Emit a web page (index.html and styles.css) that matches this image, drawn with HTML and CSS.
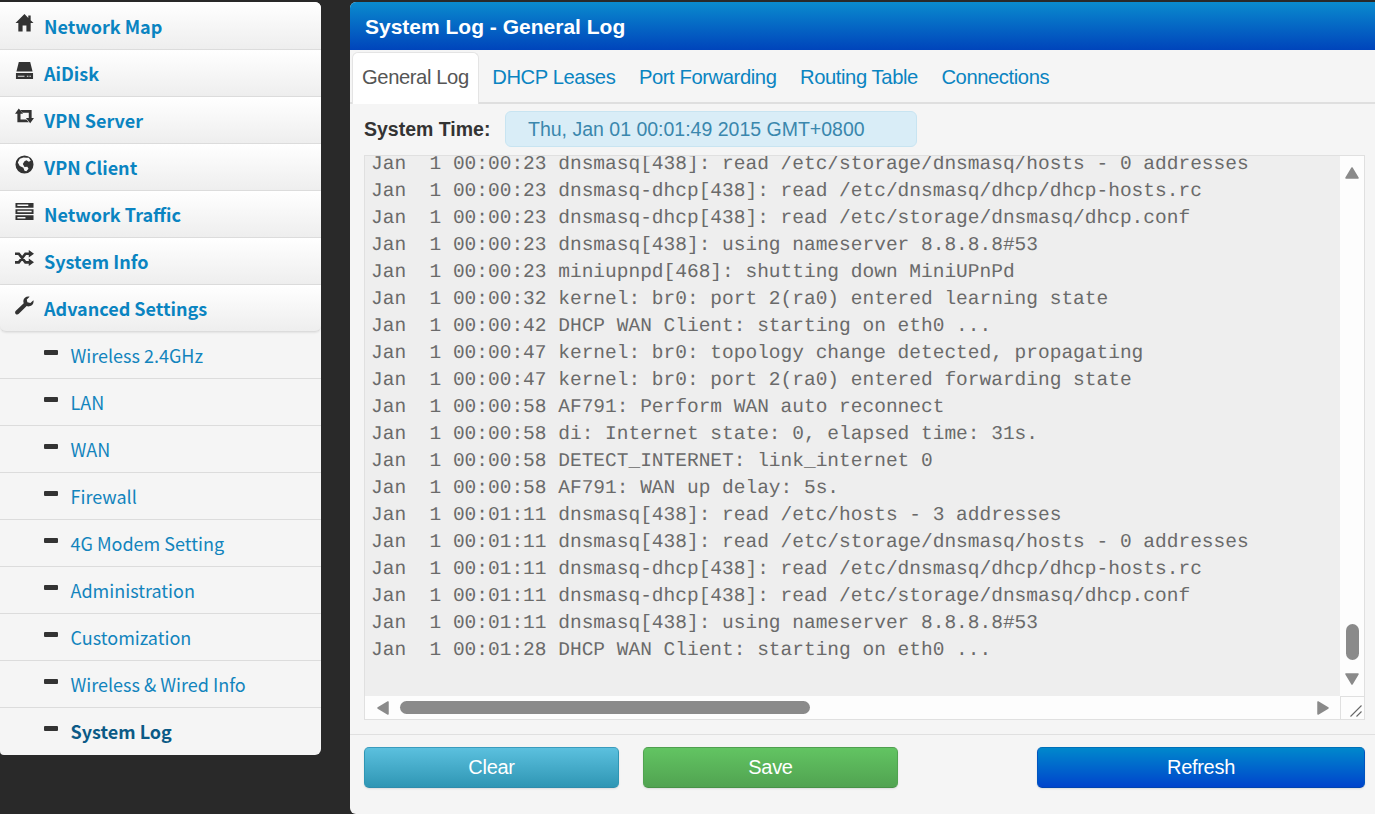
FILE: index.html
```html
<!DOCTYPE html>
<html lang="en">
<head>
<meta charset="utf-8">
<title>System Log - General Log</title>
<link rel="stylesheet" href="styles.css">
</head>
<body>
<div class="page">
  <nav class="side">
    <a class="top first"><svg class="ico" viewBox="0 0 20 20"><path d="M10 0 .5 9.5H3.5V18.5H8V12H12V18.5H16.5V9.5H19.5L16.5 6.6V1.5H14V4.2Z"/></svg><span>Network Map</span></a>
    <a class="top"><svg class="ico" viewBox="0 0 20 20"><path d="M4 1H16L18.5 11H1.5ZM1 12.5H19V19H1Z"/><path class="cut" d="M12.5 16h1.6M15.2 16h1.6M3 16h7"/></svg><span>AiDisk</span></a>
    <a class="top"><svg class="ico" viewBox="0 0 20 20"><path d="M4 .5 8.5 6H5.8V12H12L14.5 15H2.5V6H0ZM5.5 2H17.5V10.5H20L16 16 11.5 10.5H14.5V5H8Z"/></svg><span>VPN Server</span></a>
    <a class="top"><svg class="ico" viewBox="0 0 20 20"><path fill-rule="evenodd" d="M10 .5a9.5 9.5 0 1 0 0 19 9.5 9.5 0 0 0 0-19ZM9 2.6 12 3 14.5 2.8 16.6 6 14.5 7 12 5.6 10 6.5 8.2 9.5 10 12.5 13 12.3 14.2 14.5 12 17 10 16.6 8.8 13.5 5 11.5 3 8 5 4Z"/></svg><span>VPN Client</span></a>
    <a class="top"><svg class="ico" viewBox="0 0 20 20"><path fill-rule="evenodd" d="M.5 1H19.5V6H.5ZM.5 7.5H19.5V12.5H.5ZM.5 14H19.5V19H.5ZM2.5 2.7V4.3H14V2.7ZM2.5 9.2V10.8H17.5V9.2ZM2.5 15.7V17.3H11V15.7Z"/></svg><span>Network Traffic</span></a>
    <a class="top"><svg class="ico" viewBox="0 0 20 20"><path class="ln" d="M0 5H4L11 14H15M0 14H4L11 5H15"/><path d="M14.5 1 20 5 14.5 9ZM14.5 10 20 14 14.5 18Z"/></svg><span>System Info</span></a>
    <a class="top adv"><svg class="ico" viewBox="0 0 20 20"><path d="M19.4 4.4 16.2 7.4 13 6.6 12.4 3.7 15.4.7C12.5-.2 9 1.7 8.8 5 8.7 6 8.9 6.8 9.2 7.6L.9 15.6C-.2 16.7-.1 18 .7 18.9 1.6 19.8 3 19.8 4 18.8L12.3 10.6C13 10.9 14 11 15 10.9 18.2 10.4 20.2 7.4 19.4 4.4Z"/></svg><span>Advanced Settings</span></a>
    <a class="sub"><i class="dash"></i><span>Wireless 2.4GHz</span></a>
    <a class="sub"><i class="dash"></i><span>LAN</span></a>
    <a class="sub"><i class="dash"></i><span>WAN</span></a>
    <a class="sub"><i class="dash"></i><span>Firewall</span></a>
    <a class="sub"><i class="dash"></i><span>4G Modem Setting</span></a>
    <a class="sub"><i class="dash"></i><span>Administration</span></a>
    <a class="sub"><i class="dash"></i><span>Customization</span></a>
    <a class="sub"><i class="dash"></i><span>Wireless &amp; Wired Info</span></a>
    <a class="sub active"><i class="dash"></i><span>System Log</span></a>
  </nav>
  <main class="panel">
    <h1 class="title">System Log - General Log</h1>
    <div class="tabs">
      <a class="tab on">General Log</a>
      <a class="tab">DHCP Leases</a>
      <a class="tab">Port Forwarding</a>
      <a class="tab">Routing Table</a>
      <a class="tab">Connections</a>
    </div>
    <div class="time">
      <b class="time-label">System Time:</b>
      <div class="time-val">Thu, Jan 01 00:01:49 2015 GMT+0800</div>
    </div>
    <div class="log">
      <div class="log-view"><pre class="log-text">Jan  1 00:00:23 dnsmasq[438]: read /etc/storage/dnsmasq/hosts - 0 addresses
Jan  1 00:00:23 dnsmasq-dhcp[438]: read /etc/dnsmasq/dhcp/dhcp-hosts.rc
Jan  1 00:00:23 dnsmasq-dhcp[438]: read /etc/storage/dnsmasq/dhcp.conf
Jan  1 00:00:23 dnsmasq[438]: using nameserver 8.8.8.8#53
Jan  1 00:00:23 miniupnpd[468]: shutting down MiniUPnPd
Jan  1 00:00:32 kernel: br0: port 2(ra0) entered learning state
Jan  1 00:00:42 DHCP WAN Client: starting on eth0 ...
Jan  1 00:00:47 kernel: br0: topology change detected, propagating
Jan  1 00:00:47 kernel: br0: port 2(ra0) entered forwarding state
Jan  1 00:00:58 AF791: Perform WAN auto reconnect
Jan  1 00:00:58 di: Internet state: 0, elapsed time: 31s.
Jan  1 00:00:58 DETECT_INTERNET: link_internet 0
Jan  1 00:00:58 AF791: WAN up delay: 5s.
Jan  1 00:01:11 dnsmasq[438]: read /etc/hosts - 3 addresses
Jan  1 00:01:11 dnsmasq[438]: read /etc/storage/dnsmasq/hosts - 0 addresses
Jan  1 00:01:11 dnsmasq-dhcp[438]: read /etc/dnsmasq/dhcp/dhcp-hosts.rc
Jan  1 00:01:11 dnsmasq-dhcp[438]: read /etc/storage/dnsmasq/dhcp.conf
Jan  1 00:01:11 dnsmasq[438]: using nameserver 8.8.8.8#53
Jan  1 00:01:28 DHCP WAN Client: starting on eth0 ...</pre></div>
      <div class="vbar">
        <svg class="arrow" viewBox="0 0 16 14"><path d="M8 2 14 12H2Z"/></svg>
        <div class="vthumb"></div>
        <svg class="arrow" viewBox="0 0 16 14"><path d="M2 2H14L8 12Z"/></svg>
      </div>
      <div class="hbar">
        <svg class="harrow" viewBox="0 0 14 16"><path d="M12 2V14L2 8Z"/></svg>
        <div class="htrack"><div class="hthumb"></div></div>
        <svg class="harrow" viewBox="0 0 14 16"><path d="M2 2V14L12 8Z"/></svg>
      </div>
      <div class="corner"><svg viewBox="0 0 14 14"><path d="M1.5 12.5 12.5 1.5M7.5 12.5 12.5 7.5"/></svg></div>
    </div>
    <div class="actions">
      <button class="btn clear">Clear</button>
      <button class="btn save">Save</button>
      <button class="btn refresh">Refresh</button>
    </div>
  </main>
</div>
</body>
</html>
```
FILE: styles.css
```css
* { box-sizing: border-box; }
html, body { margin: 0; height: 100%; }
body { background: #292929; overflow: hidden; font-family: "Liberation Sans", Arial, sans-serif; }
.page { display: flex; align-items: flex-start; gap: 29px; height: 814px; padding-top: 2px; }

.side { width: 321px; flex: none; display: flex; flex-direction: column; background: #f5f5f5; border-radius: 0 6px 6px 4px; overflow: hidden;
  font-family: "Noto Sans CJK SC", "Noto Sans", sans-serif; }
.top, .sub { display: flex; height: 47px; border-bottom: 1px solid #dcdcdc; }
.top { background: linear-gradient(#ffffff, #eeeeee); padding: 9px 0 0 15px; color: #0a84c1; font-size: 18px; line-height: 29px; font-weight: 700; }
.first { height: 48px; padding-top: 10px; }
.top span { margin-left: 10px; }
.ico { width: 19px; height: 19px; flex: none; fill: #333; margin-top: 2px; }
.ico .cut { fill: none; stroke: #e8e8e8; stroke-width: 1.2; }
.ico .ln { fill: none; stroke: #333; stroke-width: 2.8; }
.adv { border-radius: 0 0 6px 6px; box-shadow: 0 1px 2px rgba(0,0,0,.08); z-index: 1; }
.sub { padding: 9px 0 0 44px; color: #1284bd; font-size: 18px; line-height: 29px; font-weight: 400; }
.sub span { margin-left: 12.5px; }
.dash { display: block; width: 14px; height: 5px; background: #333; margin-top: 9px; border-radius: 1px; }
.active { color: #0b5a86; font-weight: 700; border-bottom: 0; }

.panel { flex: 1; height: 812px; background: #f5f5f5; border-radius: 6px 0 0 6px; overflow: hidden; display: flex; flex-direction: column; }
.title { margin: 0; height: 48px; padding: 0 15px; background: linear-gradient(#0a8bce, #0044bb); color: #fff; font-size: 21px; font-weight: 700; line-height: 49px; }
.tabs { display: flex; height: 54px; padding: 2px 0 0 2px; border-bottom: 2px solid #dfdfdf; font-size: 20.2px; letter-spacing: -.4px; }
.tab { color: #0a84c1; line-height: 51px; padding: 0 11.75px; height: 52px; }
.on { background: #fff; color: #555; border: 1px solid #e4e4e4; border-bottom: 0; border-radius: 6px 6px 0 0; padding: 0 9px; height: 52px; line-height: 49px; margin-right: 1.75px; }

.time { display: flex; height: 51px; padding: 7px 0 0 14px; }
.time-label { color: #333; font-size: 19.5px; line-height: 37px; width: 141px; }
.time-val { width: 412px; height: 36px; background: #d9edf7; border: 1px solid #c8e4f1; border-radius: 6px; color: #3a87ad; font-size: 19.5px; line-height: 35px; padding-left: 22px; }

.log { margin: 0 10px 0 14px; height: 565px; display: grid; grid-template-columns: 1fr 24px; grid-template-rows: 540px 23px; border: 1px solid #e0e0e0; background: #fff; }
.log-view { background: #eeeeee; overflow: hidden; }
.log-text { margin: -5px 0 0 6px; font-family: "Liberation Mono", "Courier New", monospace; font-size: 19.5px; line-height: 27px; color: #6a6a6a; text-rendering: geometricPrecision; }
.vbar { background: #fdfdfd; display: flex; flex-direction: column; align-items: center; padding: 10px 0 10px; }
.arrow { width: 16px; height: 14px; fill: #8a8a8a; stroke: #8a8a8a; stroke-width: 1.5; stroke-linejoin: round; flex: none; }
.vthumb { width: 13px; height: 36px; background: #8a8a8a; border-radius: 7px; margin: auto 0 12px; }
.hbar { background: #fdfdfd; display: flex; align-items: center; padding: 0 10px 0 11px; }
.harrow { width: 14px; height: 16px; fill: #8a8a8a; stroke: #8a8a8a; stroke-width: 1.5; stroke-linejoin: round; flex: none; }
.htrack { flex: 1; padding: 0 10px; }
.hthumb { width: 410px; height: 13px; background: #8a8a8a; border-radius: 7px; }
.corner { background: #fdfdfd; border-left: 1px solid #e0e0e0; border-top: 1px solid #e0e0e0; }
.corner svg { display: block; width: 14px; height: 14px; margin: 7px 0 0 8px; fill: none; stroke: #666; stroke-width: 1.1; }

.actions { display: flex; margin-top: 14px; padding: 12px 10px 0 14px; border-top: 1px solid #e0e0e0; }
.btn { width: 255px; height: 41px; border: 1px solid transparent; border-radius: 5px; color: #fff; font: 20px/1 "Liberation Sans", Arial, sans-serif; letter-spacing: -.3px; box-shadow: 0 1px 2px rgba(0,0,0,.1); padding: 0 0 2px; }
.clear { background: linear-gradient(#5bc0de, #2f96b4); border-color: #3a9bbd #2f96b4 #2f8cac; margin-right: 24px; }
.save { background: linear-gradient(#62c462, #51a351); border-color: #4f9f4f #51a351 #479247; }
.refresh { background: linear-gradient(#0088cc, #0044cc); border-color: #0070b8 #0055c0 #0044b0; margin-left: auto; width: 328px; }
```
